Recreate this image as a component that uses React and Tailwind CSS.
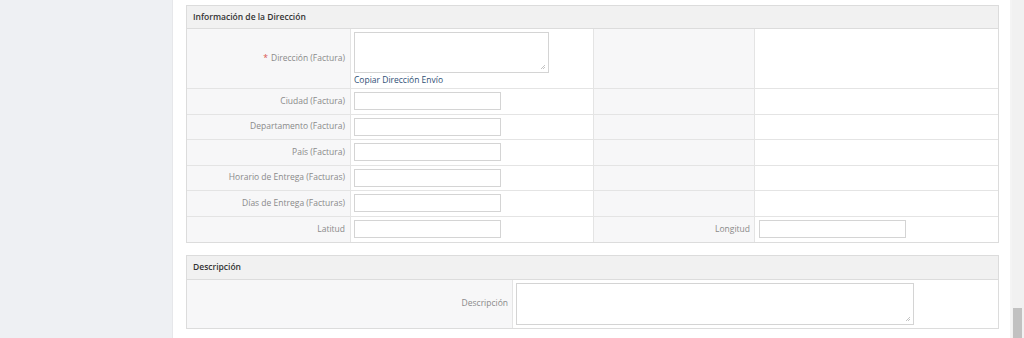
import React from "react";

const rows = [
  { label: "Ciudad (Factura)" },
  { label: "Departamento (Factura)" },
  { label: "País (Factura)" },
  { label: "Horario de Entrega (Facturas)" },
  { label: "Días de Entrega (Facturas)" },
];

function TextInput({ className = "" }) {
  return (
    <input
      type="text"
      className={"h-[18px] w-[147px] border border-[#d4d4d4] bg-white outline-none " + className}
    />
  );
}

function Grip() {
  return (
    <svg className="absolute bottom-[2px] right-[2px]" width="6" height="6" viewBox="0 0 6 6">
      <path d="M5 1 L1 5 M5 3 L3 5" stroke="#b5b5b5" strokeWidth="0.8" />
    </svg>
  );
}

function App() {
  return (
    <div
      className="flex h-[338px] w-[1024px] overflow-hidden bg-[#eef0f3] text-[8.5px]"
      style={{ fontFamily: '"Open Sans", "Liberation Sans", sans-serif' }}
    >
      <div className="w-[172px] shrink-0" />
      <div className="w-[838px] shrink-0 border-l border-[#e6e7ea] bg-white pl-[13px] pr-[11px]">
        {/* Información de la Dirección */}
        <div className="mt-[5px] border border-[#dcdcdc]">
          <div className="flex h-[23px] items-center border-b border-[#dcdcdc] bg-[#f1f1f1] pl-[6px] font-semibold text-[#333]">
            Información de la Dirección
          </div>
          <div className="flex h-[60px] border-b border-[#e4e4e4]">
            <div className="flex w-[164px] items-center justify-end border-r border-[#e4e4e4] bg-[#f7f7f8] pr-[5px] text-[#8a8a8a]">
              <span className="mr-[3px] text-[#d9534f]">*</span>Dirección (Factura)
            </div>
            <div className="w-[242px] pl-[3px] pt-[3px]">
              <div className="relative h-[41px] w-[195px] border border-[#d4d4d4] bg-white">
                <Grip />
              </div>
              <div className="mt-[1px] text-[#2f4f76]">Copiar Dirección Envío</div>
            </div>
            <div className="w-[162px] border-x border-[#e4e4e4] bg-[#f7f7f8]" />
            <div className="flex-1" />
          </div>
          {rows.map((r) => (
            <div key={r.label} className="flex h-[25.5px] border-b border-[#e4e4e4]">
              <div className="flex w-[164px] items-center justify-end border-r border-[#e4e4e4] bg-[#f7f7f8] pr-[5px] text-[#8a8a8a]">
                {r.label}
              </div>
              <div className="flex w-[242px] items-center pl-[3px]">
                <TextInput />
              </div>
              <div className="w-[162px] border-x border-[#e4e4e4] bg-[#f7f7f8]" />
              <div className="flex-1" />
            </div>
          ))}
          <div className="flex h-[25px]">
            <div className="flex w-[164px] items-center justify-end border-r border-[#e4e4e4] bg-[#f7f7f8] pr-[5px] text-[#8a8a8a]">
              Latitud
            </div>
            <div className="flex w-[242px] items-center pl-[3px]">
              <TextInput />
            </div>
            <div className="flex w-[162px] items-center justify-end border-x border-[#e4e4e4] bg-[#f7f7f8] pr-[4px] text-[#8a8a8a]">
              Longitud
            </div>
            <div className="flex flex-1 items-center pl-[4px]">
              <TextInput />
            </div>
          </div>
        </div>

        {/* Descripción */}
        <div className="mt-[12px] border border-[#dcdcdc]">
          <div className="flex h-[24px] items-center border-b border-[#dcdcdc] bg-[#f1f1f1] pl-[6px] font-semibold text-[#333]">
            Descripción
          </div>
          <div className="flex h-[48px]">
            <div className="flex w-[326px] items-center justify-end border-r border-[#e4e4e4] bg-[#f7f7f8] pr-[4px] text-[#8a8a8a]">
              Descripción
            </div>
            <div className="flex flex-1 items-center pl-[3px]">
              <div className="relative h-[42px] w-[398px] border border-[#d4d4d4] bg-white">
                <Grip />
              </div>
            </div>
          </div>
        </div>
      </div>
      <div className="w-[2px] shrink-0 bg-[#f4f4f4]" />
      <div className="flex w-[12px] shrink-0 flex-col bg-[#f1f1f1]">
        <div className="h-[308px]" />
        <div className="ml-[1px] w-[9px] flex-1 bg-[#c1c1c1]" />
      </div>
    </div>
  );
}

export default App;
